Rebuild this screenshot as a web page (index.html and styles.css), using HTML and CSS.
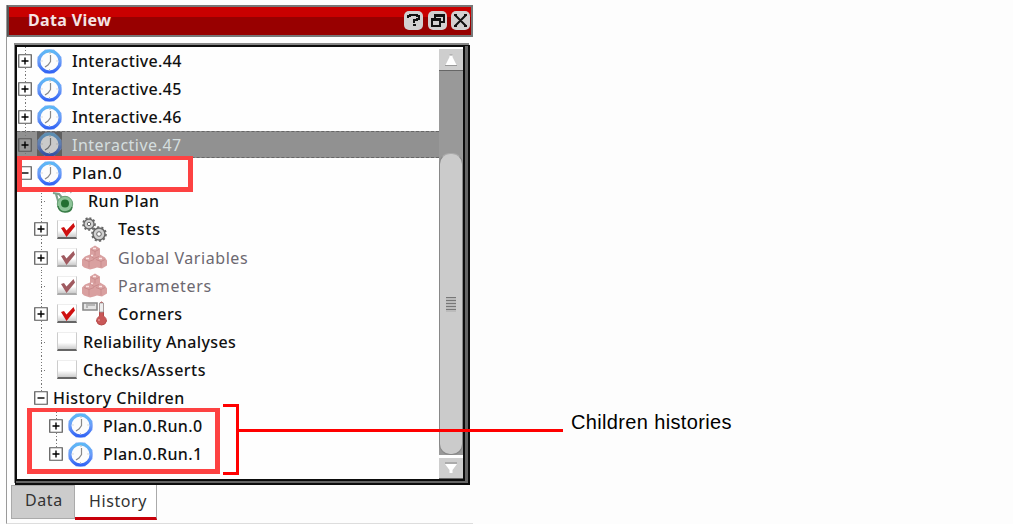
FILE: index.html
```html
<!DOCTYPE html>
<html lang="en">
<head>
<meta charset="utf-8">
<title>Data View</title>
<link rel="stylesheet" href="styles.css">
</head>
<body>
<svg class="defs" width="0" height="0">
  <defs>
    <linearGradient id="ring" x1="0" y1="0" x2="0" y2="1"><stop offset="0" stop-color="#5cb8f5"/><stop offset=".5" stop-color="#6a9cf8"/><stop offset="1" stop-color="#3264f4"/></linearGradient>
    <symbol id="clock" viewBox="0 0 25 25"><path d="M8 .5h9L24.500 8v9L17 24.500H8L.5 17V8z" fill="#8faef8"/><circle cx="12.500" cy="12.500" r="10.500" fill="#fcfcfc" stroke="url(#ring)" stroke-width="3"/><path d="M13.500 6v6.500L11 16l-3 2" fill="none" stroke="#888" stroke-width="1.200"/><path d="M12 4h2M4.500 12h1M19.500 12h1M12 20.500h1" stroke="#bbb"/></symbol>
    <symbol id="plus" viewBox="0 0 14 14"><path d="M.75.750h12.500v12.500H.75z" fill="none" stroke="#555" stroke-width="1.200"/><path d="M3.500 7h7M7 3.500v7" stroke="#000" stroke-width="1.400"/></symbol>
    <symbol id="minus" viewBox="0 0 14 14"><path d="M.75.750h12.500v12.500H.75z" fill="#fff" stroke="#555" stroke-width="1.200"/><path d="M3.500 7h7" stroke="#000" stroke-width="1.400"/></symbol>
    <symbol id="check" viewBox="0 0 20 20"><path d="M4 8l3-1 2.500 3.500L16.500 3 18 6.500 9.500 17z" fill="currentColor"/></symbol>
    <symbol id="cubes" viewBox="0 0 25 24"><path d="M8 3l5-3 5 3v6l5 3 2 3v5l-5 3-5-1-3 1-4 1-6-2-2-2v-6l3-3 5-2z" fill="#d9a0a0"/><path d="M9 4l4 2 4-2M13 6v4M2 14l5 2 5-2M7 16v6M14 14l5 2 4-2M19 16v6M8 10l4 3 5-2" fill="none" stroke="#ca8c8d"/><path d="M11 3h3M4 13h3M17 13h3M9 10h2" stroke="#fce4e4" stroke-width="1.500"/></symbol>
    <symbol id="gears" viewBox="0 0 25 25"><g fill="#d0d0d0" stroke="#666"><circle cx="7" cy="7" r="5" stroke-width="1.300"/><circle cx="7" cy="7" r="6" fill="none" stroke-width="1.700" stroke-dasharray="2 2"/><circle cx="7" cy="7" r="1.700" fill="#fff"/><circle cx="17" cy="17" r="6" stroke-width="1.500"/><circle cx="17" cy="17" r="7" fill="none" stroke-width="1.700" stroke-dasharray="2.200 2.200"/><circle cx="17" cy="17" r="2.300" fill="#fff"/></g></symbol>
    <symbol id="corner" viewBox="0 0 25 25"><path d="M1 2h14v7H1z" fill="#e4e4e4" stroke="#888" stroke-width="1.600"/><path d="M4 4h9M4 6h2" stroke="#888"/><path d="M17.500 2.500q2-3 4 0V15q3 2 3 5-1 4-5 4t-5-4q0-3 3-5z" fill="#c95858" stroke="#b54848"/><path d="M17.500 2h4v9h-4z" fill="#eee" stroke="#999" stroke-width=".8"/><path d="M17 18v2" stroke="#f4b0b0"/></symbol>
    <symbol id="run" viewBox="0 0 24 24"><path d="M1 4l6 1 4 5M4 5l3 10" fill="none" stroke="#7fa08c" stroke-width="2.200"/><path d="M10 3h4M18 4l3-2" stroke="#aaa"/><circle cx="13" cy="15" r="7.700" fill="#8dc498" stroke="#659e72"/><circle cx="13" cy="14.500" r="4" fill="#236f31"/><path d="M6 17q1 6 7 6t7-5" fill="none" stroke="#397d47" stroke-width="1.500"/></symbol>
  </defs>
</svg>
<main class="page">
  <section class="window">
    <header class="titlebar">
      <h1 class="title">Data View</h1>
      <div class="controls">
        <svg viewBox="0 0 19 19"><rect width="19" height="19" rx="5"/><path d="M4 7V5h2V4h7v1h2v3h-2v1h-3v3M9 14h3"/></svg>
        <svg viewBox="0 0 19 19"><rect width="19" height="19" rx="5"/><path d="M7 7V4h9v7h-4M7 5h9M4 8h8v7H4zM4 9h8"/></svg>
        <svg viewBox="0 0 19 19"><rect width="19" height="19" rx="5"/><path d="M4 4l11 11M15 4L4 15M3 4h3M13 4h3M3 15h3M13 15h3"/></svg>
      </div>
    </header>
    <div class="frame">
      <ul class="tree">
        <li class="row root"><svg class="exp"><use href="#plus"/></svg><svg class="clock"><use href="#clock"/></svg><span class="label interactive">Interactive.44</span></li>
        <li class="row root"><svg class="exp"><use href="#plus"/></svg><svg class="clock"><use href="#clock"/></svg><span class="label interactive">Interactive.45</span></li>
        <li class="row root"><svg class="exp"><use href="#plus"/></svg><svg class="clock"><use href="#clock"/></svg><span class="label interactive">Interactive.46</span></li>
        <li class="row root selected"><svg class="exp"><use href="#plus"/></svg><svg class="clock"><use href="#clock"/></svg><span class="label interactive">Interactive.47</span></li>
        <li class="row root"><svg class="exp"><use href="#minus"/></svg><svg class="clock"><use href="#clock"/></svg><span class="label plan">Plan.0</span></li>
        <li class="row child leaf"><svg class="run"><use href="#run"/></svg><span class="label runplan">Run Plan</span></li>
        <li class="row child"><svg class="exp"><use href="#plus"/></svg><i class="box"><svg><use href="#check"/></svg></i><svg class="icon"><use href="#gears"/></svg><span class="label tests">Tests</span></li>
        <li class="row child dim"><svg class="exp"><use href="#plus"/></svg><i class="box"><svg><use href="#check"/></svg></i><svg class="icon"><use href="#cubes"/></svg><span class="label globals">Global Variables</span></li>
        <li class="row child leaf dim"><i class="box"><svg><use href="#check"/></svg></i><svg class="icon"><use href="#cubes"/></svg><span class="label params">Parameters</span></li>
        <li class="row child"><svg class="exp"><use href="#plus"/></svg><i class="box"><svg><use href="#check"/></svg></i><svg class="icon"><use href="#corner"/></svg><span class="label corners">Corners</span></li>
        <li class="row child leaf"><i class="box"></i><span class="label reliability">Reliability Analyses</span></li>
        <li class="row child leaf"><i class="box"></i><span class="label checks">Checks/Asserts</span></li>
        <li class="row child last"><svg class="exp"><use href="#minus"/></svg><span class="label children">History Children</span></li>
        <li class="row grand"><svg class="exp"><use href="#plus"/></svg><svg class="clock"><use href="#clock"/></svg><span class="label planrun">Plan.0.Run.0</span></li>
        <li class="row grand last"><svg class="exp"><use href="#plus"/></svg><svg class="clock"><use href="#clock"/></svg><span class="label planrun">Plan.0.Run.1</span></li>
      </ul>
      <div class="scrollbar">
        <div class="arrow up"><svg viewBox="0 0 12 12"><path d="M4.500 1h3v2l4 8H.5l4-8z" fill="#fff"/><path d="M4.500 1h3M0 11.500h12" stroke="#999"/></svg></div>
        <div class="track"><div class="thumb"><i class="grip"></i></div></div>
        <div class="arrow down"><svg viewBox="0 0 12 12"><path d="M0 2h12L7.500 8v3h-3V8z" fill="#fff"/><path d="M0 1h12" stroke="#888"/></svg></div>
      </div>
    </div>
    <nav class="tabs"><span class="tab data"><span>Data</span></span><span class="tab active"><span>History</span></span></nav>
  </section>
  <div class="mark plan-mark"></div>
  <div class="mark runs-mark"></div>
  <div class="bracket"></div>
  <div class="leader"></div>
  <p class="callout">Children histories</p>
</main>
</body>
</html>
```
FILE: styles.css
```css
* { box-sizing: border-box; }
body { margin: 0; background: #fdfdfd; }
.defs { position: absolute; }
.page { position: relative; width: 1013px; height: 524px; overflow: hidden; padding: 5px 0 0 6px; }
svg { display: block; flex: none; }
.window { width: 467px; height: 519px; border-left: 1px solid #999; border-bottom: 1px solid #ddd; font-family: "Noto Sans", "Open Sans", sans-serif; font-size: 16px; }
.titlebar { display: flex; justify-content: space-between; align-items: center; height: 32px; padding: 0 1px 0 19px; border: 2px solid #777; border-left-color: #555; background: linear-gradient(#c90000 0 10px, #980000 10px); }
.title { margin: -2px 0 0; color: #f6e4e4; font-size: 16px; font-weight: 700; line-height: 26px; letter-spacing: .35px; }
.controls { display: flex; gap: 4.500px; margin-top: -2px; }
.controls svg { width: 19px; height: 19px; }
.controls rect { fill: #d2d0d0; }
.controls path { fill: none; stroke: #111; stroke-width: 2; }
.frame { display: flex; width: 455px; height: 440px; margin: 8px 0 0 8px; border-style: solid double double solid; border-width: 2px 7px 6px 2px; border-color: #0c0c0c; background: #666; box-shadow: -1px -2px 0 #888; }
.tree { flex: 1; margin: 0; padding: 0; list-style: none; background: #fefefe; }
.row { display: flex; align-items: center; height: 28.080px; color: #111; background-repeat: no-repeat; }
.root { padding-left: 1px; }
.root:not(:nth-child(5)) { background-image: repeating-linear-gradient(#777 0 1px, transparent 1px 3px); background-size: 1px 100%; background-position: 8px 0; }
.child { padding-left: 17px; background-image: repeating-linear-gradient(#777 0 1px, transparent 1px 3px); background-size: 1px 100%; background-position: 24px 0; }
.grand { padding-left: 32px; background-image: repeating-linear-gradient(#777 0 1px, transparent 1px 3px); background-size: 1px 100%; background-position: 39px 0; }
.last { background-size: 1px 50%; }
.leaf { background-image: repeating-linear-gradient(#777 0 1px, transparent 1px 3px), repeating-linear-gradient(90deg, #777 0 1px, transparent 1px 3px); background-size: 1px 100%, 6px 1px; background-position: 24px 0, 24px 14px; }
.exp { width: 14px; height: 14px; background: #fff; }
.clock { width: 25px; height: 25px; margin-left: 5px; }
.clock + .label { margin-left: 10px; }
.label { white-space: nowrap; line-height: 24px; font-weight: 500; }
.interactive { letter-spacing: .32px; }
.plan { letter-spacing: .6px; }
.runplan { letter-spacing: .5px; }
.tests { letter-spacing: .8px; }
.globals { letter-spacing: .56px; }
.params { letter-spacing: .7px; }
.corners { letter-spacing: .6px; }
.reliability { letter-spacing: .36px; }
.checks { letter-spacing: .5px; }
.planrun { letter-spacing: .4px; }
.exp + .children { margin-left: 5px; letter-spacing: .5px; }
.selected { height: 27px; margin-bottom: 1px; background-color: #919191; border: 1px dashed #666; border-width: 1px 0; color: #d5dedf; }
.selected .label { font-weight: 400; letter-spacing: .5px; }
.selected .exp { background: #999; }
.selected .clock { background: #777; filter: brightness(.8) saturate(.7); }
.run { width: 24px; height: 24px; margin-left: 18px; }
.run + .label { margin-left: 12px; }
.box { display: flex; flex: none; width: 20px; height: 19px; margin-left: 9px; border: 1px solid #ccc; border-bottom: 2px solid #666; border-top-color: #eee; background: linear-gradient(#fff 60%, #ccc); color: #cf1010; }
.leaf .box { margin-left: 23px; }
.box svg { width: 20px; height: 20px; margin: -1px; }
.box + .label { margin-left: 6px; }
.icon { width: 25px; height: 25px; margin-left: 5px; }
.icon + .label { margin-left: 11px; }
.dim { color: #6c6870; }
.dim .label { font-weight: 400; }
.dim .box { color: #a05a60; border-bottom-color: #aaa; }
.scrollbar { display: flex; flex-direction: column; width: 24px; padding-top: 2px; background: #fff; }
.arrow { display: flex; align-items: center; justify-content: center; flex: none; height: 22px; background: #cecece; border-bottom: 1px solid #666; }
.arrow svg { width: 12px; height: 12px; }
.down { height: 24px; border-top: 3px solid #fff; }
.track { flex: 1; padding-top: 82px; background: #999; }
.thumb { display: flex; align-items: center; justify-content: center; height: 100%; border: 1px solid #888; border-top-color: #aaa; border-radius: 11px; background: #cbcbcb; }
.grip { width: 10px; height: 15px; background: repeating-linear-gradient(#777 0 1px, #bbb 1px 3px); }
.tabs { display: flex; align-items: stretch; height: 35px; margin-left: 4px; }
.tab { display: flex; color: #333; line-height: 22px; letter-spacing: .6px; }
.data { width: 64px; height: 34px; padding: 3px 0 0 13px; border: 1px solid #aaa; background: #ccc; }
.active { width: 82px; padding: 5px 0 0 14px; border-right: 1px solid #aaa; border-bottom: 3px solid #c8000a; background: #fff; }
.mark { position: absolute; border: 5px solid #fd4242; border-top-width: 4px; }
.plan-mark { left: 17px; top: 156px; width: 176px; height: 36px; }
.runs-mark { left: 27px; top: 408px; width: 193px; height: 66px; }
.bracket { position: absolute; left: 223px; top: 404px; width: 16px; height: 71px; border: 3px solid #f00; border-left: 0; }
.leader { position: absolute; left: 239px; top: 429px; width: 324px; height: 3px; background: #f00; }
.callout { position: absolute; left: 571px; top: 410px; margin: 0; font: 20px/24px "Liberation Sans", Arial, sans-serif; letter-spacing: .35px; color: #000; white-space: nowrap; }
```
